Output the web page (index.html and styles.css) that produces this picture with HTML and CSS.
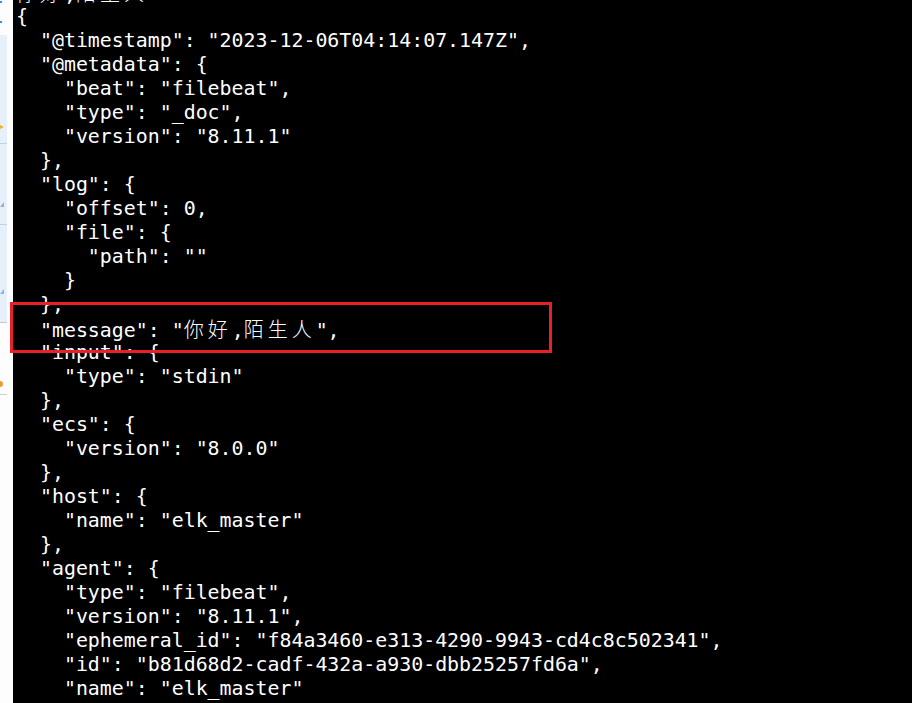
FILE: index.html
```html
<!DOCTYPE html>
<html lang="zh">
<head>
<meta charset="utf-8">
<title>filebeat output</title>
<link rel="stylesheet" href="styles.css">
</head>
<body>
<div class="screen">
  <aside class="strip">
    <div class="strip-top">
      <span class="dot dot-a"></span>
      <span class="dot dot-b"></span>
    </div>
    <div class="strip-light">
      <span class="mark-yellow m1"></span>
      <span class="hline m2"></span>
      <span class="tri m3"></span>
      <span class="hline m4"></span>
      <span class="tri tri-blue m5"></span>
    </div>
    <div class="strip-rule"></div>
    <div class="strip-white">
      <span class="mark-orange m6"></span>
      <span class="grayline m7"></span>
    </div>
  </aside>
  <main class="term">
    <div class="line partial"><span class="cjk">你好</span>,<span class="cjk">陌生人</span></div>
    <div class="line">{</div>
    <div class="line">  "@timestamp": "2023-12-06T04:14:07.147Z",</div>
    <div class="line">  "@metadata": {</div>
    <div class="line">    "beat": "filebeat",</div>
    <div class="line">    "type": "_doc",</div>
    <div class="line">    "version": "8.11.1"</div>
    <div class="line">  },</div>
    <div class="line">  "log": {</div>
    <div class="line">    "offset": 0,</div>
    <div class="line">    "file": {</div>
    <div class="line">      "path": ""</div>
    <div class="line">    }</div>
    <div class="line">  },</div>
    <div class="line highlighted">  "message": "<span class="cjk">你好</span>,<span class="cjk">陌生人</span>",<span class="redbox"></span></div>
    <div class="line">  "input": {</div>
    <div class="line">    "type": "stdin"</div>
    <div class="line">  },</div>
    <div class="line">  "ecs": {</div>
    <div class="line">    "version": "8.0.0"</div>
    <div class="line">  },</div>
    <div class="line">  "host": {</div>
    <div class="line">    "name": "elk_master"</div>
    <div class="line">  },</div>
    <div class="line">  "agent": {</div>
    <div class="line">    "type": "filebeat",</div>
    <div class="line">    "version": "8.11.1",</div>
    <div class="line">    "ephemeral_id": "f84a3460-e313-4290-9943-cd4c8c502341",</div>
    <div class="line">    "id": "b81d68d2-cadf-432a-a930-dbb25257fd6a",</div>
    <div class="line">    "name": "elk_master"</div>
  </main>
</div>
</body>
</html>
```

FILE: styles.css
```css
html, body {
  margin: 0;
  padding: 0;
  background: #000;
}

.screen {
  width: 912px;
  height: 703px;
  display: flex;
  overflow: hidden;
}

/* left window strip */
.strip {
  width: 13px;
  flex: none;
  display: flex;
  flex-direction: column;
  background: #fdfdfe;
}

.strip-top {
  height: 35px;
  display: flex;
  flex-direction: column;
}

.dot {
  display: block;
  width: 2px;
  height: 2px;
  background: #3d8be0;
}
.dot-a { margin-top: 1px; }
.dot-b { margin-top: 18px; }

.strip-light {
  height: 287px;
  width: 7px;
  background: #e6f0fb;
  display: flex;
  flex-direction: column;
}

.mark-yellow {
  display: block;
  width: 0;
  height: 0;
  border-left: 4px solid #f0b020;
  border-top: 2px solid transparent;
  border-bottom: 2px solid transparent;
}
.m1 { margin-top: 90px; }

.hline {
  display: block;
  width: 7px;
  height: 1px;
  background: #b8d4ef;
}
.m2 { margin-top: 14px; }
.m4 { margin-top: 17px; }

.tri {
  display: block;
  width: 0;
  height: 0;
  border-left: 4px solid transparent;
  border-bottom: 5px solid #a8a8cc;
}
.tri-blue { border-bottom-color: #8ab4e0; }
.m3 { margin-top: 58px; }
.m5 { margin-top: 64px; }

.strip-rule {
  height: 1px;
  width: 7px;
  background: #c8c8c8;
}

.strip-white {
  flex: 1;
  display: flex;
  flex-direction: column;
}

.mark-orange {
  display: block;
  width: 3px;
  height: 6px;
  background: #f09a2a;
  border-radius: 0 3px 3px 0;
}
.m6 { margin-top: 58px; }

.grayline {
  display: block;
  width: 7px;
  height: 1px;
  background: #cfcfcf;
}
.m7 { margin-top: 7px; }

/* terminal */
.term {
  flex: 1;
  background: #000;
  color: #fff;
  font-family: "DejaVu Sans Mono", "Liberation Mono", monospace;
  font-size: 19.9px;
  line-height: 24px;
  padding-left: 3px;
  margin-top: -19px;
}

.line {
  white-space: pre;
  height: 24px;
}

.cjk {
  font-family: "Noto Sans CJK SC", sans-serif;
  font-size: 20px;
  letter-spacing: 4px;
  font-weight: 300;
}

.highlighted {
  position: relative;
}

.redbox {
  position: absolute;
  left: -6px;
  top: -15px;
  width: 536px;
  height: 45px;
  border: 3px solid #e8202a;
}
```
